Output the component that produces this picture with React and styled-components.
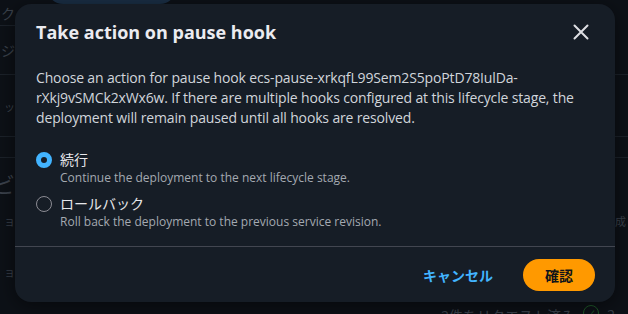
import React, { useState } from 'react'
import styled, { createGlobalStyle } from 'styled-components'

const GlobalStyle = createGlobalStyle`
  html, body {
    margin: 0;
    padding: 0;
    background: #0d1117;
  }
  body {
    font-family: "Open Sans", "Noto Sans CJK JP", sans-serif;
    -webkit-font-smoothing: antialiased;
  }
`

const options = [
  { id: 'continue', label: '続行', description: 'Continue the deployment to the next lifecycle stage.' },
  { id: 'rollback', label: 'ロールバック', description: 'Roll back the deployment to the previous service revision.' },
]

// faint page behind the dialog, only its edges show
const bgRows = [
  { height: 26, left: 'ック', leftLine: true, pill: true },
  { height: 49, left: 'ジ', leftLine: true, rightLine: true },
  { height: 62, left: 'ッ', leftLine: true, rightLine: true, small: true },
  { height: 21, leftLine: true, rightLine: true },
  { height: 50, left: 'ビ', big: true },
  { height: 26, left: 'ョ', right: '成', small: true },
  { height: 68, left: 'ョ', small: true, offset: 8 },
]

export default function App() {
  const [choice, setChoice] = useState('continue')

  return (
    <>
      <GlobalStyle />
      <Screen>
        <Backdrop>
          {bgRows.map((r, i) => (
            <BgRow key={i} $height={r.height}>
              <BgCell $line={r.leftLine} $big={r.big} $small={r.small} $offset={r.offset}>{r.left}</BgCell>
              <BgMiddle>{r.pill && <Pill />}</BgMiddle>
              <BgCell $right $line={r.rightLine} $small={r.small}>{r.right}</BgCell>
            </BgRow>
          ))}
          <BottomBar>
            <span>2件をリクエスト済み</span>
            <CheckCircle>✓</CheckCircle>
            <span>2</span>
          </BottomBar>
        </Backdrop>

        <Overlay>
          <Modal>
            <Header>
              <Title>Take action on pause hook</Title>
              <CloseButton aria-label="閉じる">
                <svg width="16" height="16" viewBox="0 0 16 16" fill="none">
                  <path d="M1.5 1.5l13 13M14.5 1.5l-13 13" stroke="#dedfe3" strokeWidth="2" strokeLinecap="round" />
                </svg>
              </CloseButton>
            </Header>
            <Body>
              <Intro>
                Choose an action for pause hook ecs-pause-xrkqfL99Sem2S5poPtD78IulDa-rXkj9vSMCk2xWx6w. If there are multiple hooks configured at this lifecycle stage, the deployment will remain paused until all hooks are resolved.
              </Intro>
              <RadioGroup>
                {options.map(o => (
                  <RadioOption key={o.id} onClick={() => setChoice(o.id)}>
                    <RadioDot $checked={choice === o.id} />
                    <RadioText>
                      <RadioLabel>{o.label}</RadioLabel>
                      <RadioDescription>{o.description}</RadioDescription>
                    </RadioText>
                  </RadioOption>
                ))}
              </RadioGroup>
            </Body>
            <Footer>
              <LinkButton>キャンセル</LinkButton>
              <PrimaryButton>確認</PrimaryButton>
            </Footer>
          </Modal>
        </Overlay>
      </Screen>
    </>
  )
}

const Screen = styled.div`
  position: relative;
  width: 628px;
  height: 314px;
  overflow: hidden;
`

const Backdrop = styled.div`
  display: flex;
  flex-direction: column;
  height: 100%;
  background: #0d1117;
`

const BgRow = styled.div`
  display: flex;
  height: ${p => p.$height}px;
  flex-shrink: 0;
`

const BgCell = styled.div`
  box-sizing: border-box;
  width: ${p => (p.$right ? 13 : 15)}px;
  flex-shrink: 0;
  display: flex;
  align-items: center;
  justify-content: ${p => (p.$right ? 'flex-start' : 'flex-end')};
  padding-top: ${p => p.$offset || 0}px;
  overflow: hidden;
  white-space: nowrap;
  font-size: ${p => (p.$big ? 22 : p.$small ? 11 : 14)}px;
  color: #3b424c;
  border-bottom: 1px solid ${p => (p.$line ? '#1c222a' : 'transparent')};
`

const BgMiddle = styled.div`
  flex: 1;
  display: flex;
  padding-left: 32px;
`

const Pill = styled.div`
  width: 129px;
  height: 32px;
  margin-top: -28px;
  border-radius: 16px;
  background: #1a2f45;
`

const BottomBar = styled.div`
  display: flex;
  align-items: flex-start;
  gap: 8px;
  justify-content: flex-end;
  padding: 3px 0 0;
  margin-right: 13px;
  font-size: 14px;
  color: #3b424c;
`

const CheckCircle = styled.span`
  width: 14px;
  height: 14px;
  border: 1.5px solid #1f5a2a;
  border-radius: 50%;
  color: #1f5a2a;
  font-size: 10px;
  display: flex;
  align-items: center;
  justify-content: center;
`

const Overlay = styled.div`
  position: absolute;
  inset: 0;
  padding: 4px 13px 12px 15px;
  display: flex;
`

const Modal = styled.div`
  flex: 1;
  display: flex;
  flex-direction: column;
  background: #161d26;
  border-radius: 16px;
  box-shadow: 0 4px 20px rgba(0, 0, 0, 0.5);
`

const Header = styled.div`
  display: flex;
  align-items: center;
  justify-content: space-between;
  padding: 16px 21px 0;
`

const Title = styled.h2`
  margin: 0;
  font-size: 18px;
  line-height: 22px;
  font-weight: 700;
  color: #ebebf0;
`

const CloseButton = styled.button`
  display: flex;
  align-items: center;
  justify-content: center;
  width: 24px;
  height: 24px;
  padding: 0;
  margin-right: 1px;
  border: 0;
  background: none;
  cursor: pointer;
`

const Body = styled.div`
  flex: 1;
  padding: 24px 21px 16px;
  border-bottom: 1px solid #424650;
`

const Intro = styled.p`
  margin: 0 0 22px;
  font-size: 14px;
  line-height: 20px;
  letter-spacing: -0.15px;
  color: #d1d5db;
`

const RadioGroup = styled.div`
  display: flex;
  flex-direction: column;
  gap: 8px;
`

const RadioOption = styled.label`
  display: flex;
  gap: 8px;
  cursor: pointer;
`

const RadioDot = styled.span`
  box-sizing: border-box;
  width: 16px;
  height: 16px;
  margin-top: 2px;
  border-radius: 50%;
  border: ${p => (p.$checked ? '5px solid #42b4ff' : '1.5px solid #8c8c94')};
  background: #161d26;
  flex-shrink: 0;
`

const RadioText = styled.div`
  display: flex;
  flex-direction: column;
`

const RadioLabel = styled.span`
  font-size: 14px;
  line-height: 20px;
  color: #e6e7ea;
`

const RadioDescription = styled.span`
  font-size: 12px;
  line-height: 16px;
  color: #a4a9b1;
`

const Footer = styled.div`
  display: flex;
  justify-content: flex-end;
  align-items: center;
  gap: 10px;
  padding: 12px 20px;
`

const LinkButton = styled.button`
  height: 32px;
  padding: 0 20px;
  border: 0;
  background: none;
  font-family: inherit;
  font-size: 14px;
  font-weight: 700;
  color: #42b4ff;
  cursor: pointer;
`

const PrimaryButton = styled.button`
  width: 72px;
  height: 32px;
  border: 0;
  border-radius: 16px;
  background: #ff9900;
  font-family: inherit;
  font-size: 14px;
  font-weight: 700;
  color: #0f141a;
  cursor: pointer;
`
